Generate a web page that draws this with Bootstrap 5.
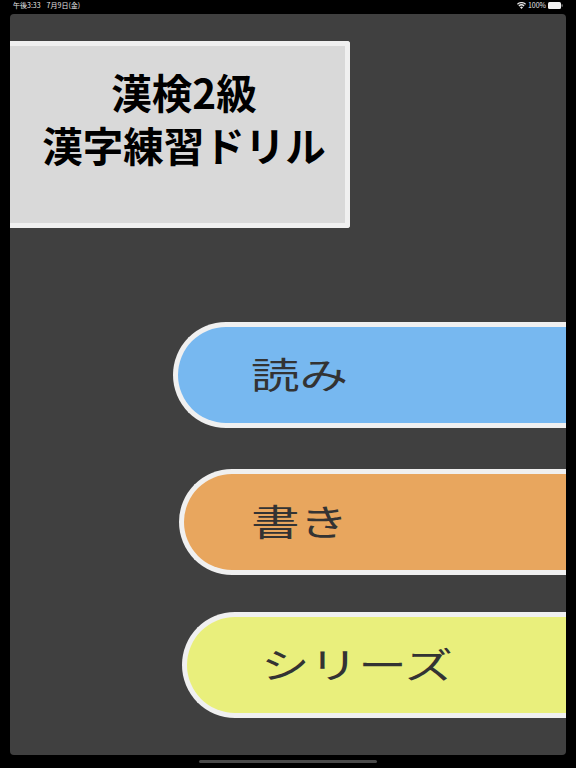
<!DOCTYPE html>
<html lang="ja">
<head>
<meta charset="utf-8">
<title>漢検2級 漢字練習ドリル</title>
<link href="https://cdn.jsdelivr.net/npm/bootstrap@5.3.0/dist/css/bootstrap.min.css" rel="stylesheet">
<style>
html,body{height:768px;overflow:hidden;background:#000;}
body{font-family:"Noto Sans CJK JP","Liberation Sans",sans-serif;}
.status-strip{height:14px;padding:0 13px 4px 13px;color:#e4e4e4;font-size:7px;line-height:10px;}
.status-strip .clock{margin-right:6px;}
.status-right{gap:2px;}
.stage{height:741px;margin:0 10px;background:#404040;border-radius:4px;padding-top:27px;overflow:hidden;}
.title-box{width:340px;height:187px;background:#d9d9d9;border:5px solid #f0f0f0;border-left:0;border-radius:0 3px 3px 0;color:#000;font-weight:700;font-size:40.5px;line-height:53px;padding:19px 0 0 13px;}
.pill{height:106px;background:#000;border:5px solid #f0f0f0;border-right:0;border-radius:53px 0 0 53px;color:#333;font-size:36px;line-height:1;padding-bottom:5px;}
.pill-text{display:inline-block;transform-origin:left center;transform:scaleX(1.35);}
.pill-read{margin-top:94px;margin-left:163px;background:#77b8f0;padding-left:73px;}
.pill-write{margin-top:41px;margin-left:169px;background:#e8a65e;padding-left:67px;}
.pill-series{margin-top:37px;margin-left:172px;background:#e9ef7c;padding-left:74px;}
.home-bar{width:178px;height:3px;margin:5px auto 0;background:#4a4a4a;border-radius:2px;}
</style>
</head>
<body>
<div class="status-strip d-flex align-items-center justify-content-between">
  <div><span class="clock">午後3:33</span><span>7月9日(金)</span></div>
  <div class="status-right d-flex align-items-center">
    <svg width="9" height="7" viewBox="0 0 18 14" aria-hidden="true"><path fill="#e8e8e8" d="M9 14 5.9 10.4a4.6 4.6 0 0 1 6.2 0zM4.6 8.9 2.8 6.8a9.2 9.2 0 0 1 12.4 0l-1.8 2.1a6.4 6.4 0 0 0-8.8 0zM1.6 5.4 0 3.4a13.4 13.4 0 0 1 18 0l-1.6 2a11 11 0 0 0-14.8 0z"/></svg>
    <span>100%</span>
    <svg width="15" height="7" viewBox="0 0 15 7" aria-hidden="true"><rect width="13" height="7" rx="1.5" fill="#f2f2f2"/><rect x="13.5" y="2.2" width="1.2" height="2.6" rx=".5" fill="#888"/></svg>
  </div>
</div>
<main class="stage">
  <div class="title-box text-center"><div>漢検2級</div><div>漢字練習ドリル</div></div>
  <div class="pill pill-read d-flex align-items-center"><span class="pill-text">読み</span></div>
  <div class="pill pill-write d-flex align-items-center"><span class="pill-text">書き</span></div>
  <div class="pill pill-series d-flex align-items-center"><span class="pill-text">シリーズ</span></div>
</main>
<div class="home-bar"></div>
<script src="https://cdn.jsdelivr.net/npm/bootstrap@5.3.0/dist/js/bootstrap.bundle.min.js"></script>
</body>
</html>
